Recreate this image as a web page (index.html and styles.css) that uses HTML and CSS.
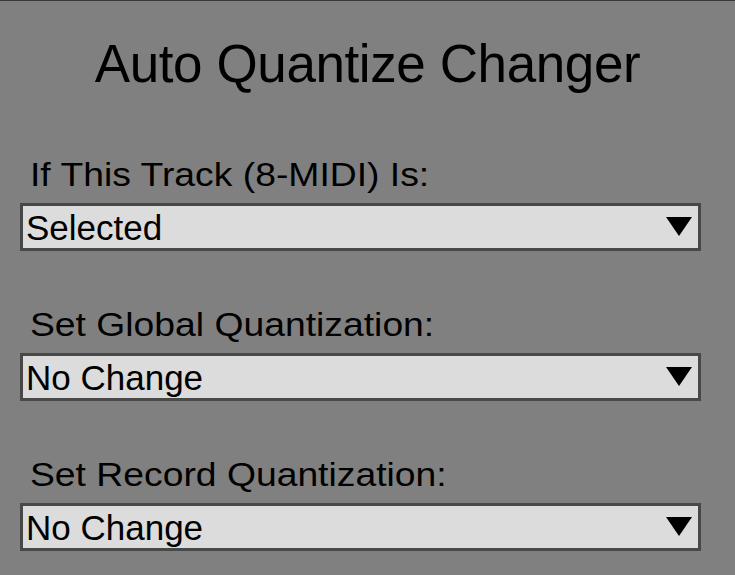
FILE: index.html
```html
<!DOCTYPE html>
<html>
<head>
<meta charset="utf-8">
<link rel="stylesheet" href="styles.css">
</head>
<body>
<div class="panel">
  <h1 class="title">Auto Quantize Changer</h1>
  <div class="form">
    <div class="field">
      <div class="label"><span class="label-text">If This Track (8-MIDI) Is:</span></div>
      <div class="dropdown">
        <span class="value">Selected</span>
        <svg class="arrow" width="26" height="19" viewBox="0 0 26 19"><polygon points="0,0 26,0 13,19" fill="#000"/></svg>
      </div>
    </div>
    <div class="field">
      <div class="label"><span class="label-text">Set Global Quantization:</span></div>
      <div class="dropdown">
        <span class="value">No Change</span>
        <svg class="arrow" width="26" height="19" viewBox="0 0 26 19"><polygon points="0,0 26,0 13,19" fill="#000"/></svg>
      </div>
    </div>
    <div class="field">
      <div class="label"><span class="label-text">Set Record Quantization:</span></div>
      <div class="dropdown">
        <span class="value">No Change</span>
        <svg class="arrow" width="26" height="19" viewBox="0 0 26 19"><polygon points="0,0 26,0 13,19" fill="#000"/></svg>
      </div>
    </div>
  </div>
</div>
</body>
</html>
```
FILE: styles.css
```css
html, body {
  margin: 0;
  padding: 0;
}
body {
  background: #808080;
  font-family: "Liberation Sans", Arial, sans-serif;
  color: #000;
  width: 735px;
  height: 575px;
  overflow: hidden;
}
.panel {
  border-top: 1px solid #383838;
  height: 574px;
  box-sizing: border-box;
  padding-top: 37px;
}
.title {
  margin: 0;
  font-size: 53px;
  font-weight: normal;
  line-height: 52px;
  height: 52px;
  text-align: center;
  letter-spacing: -0.4px;
}
.form {
  padding: 69px 34px 0 20px;
  display: flex;
  flex-direction: column;
  gap: 58px;
}
.field {
  display: flex;
  flex-direction: column;
  gap: 12px;
}
.label {
  font-size: 33px;
  line-height: 32px;
  height: 32px;
  padding-left: 10px;
}
.label-text {
  display: inline-block;
  transform: scaleX(1.13);
  transform-origin: left center;
  white-space: nowrap;
}
.dropdown {
  height: 48px;
  box-sizing: border-box;
  border: 3px solid #484848;
  background: #dcdcdc;
  display: flex;
  align-items: center;
  justify-content: space-between;
  padding: 0 6px 0 3px;
}
.value {
  font-size: 35px;
  line-height: 42px;
  padding-top: 1px;
}
.arrow {
  display: block;
  margin-top: -2px;
}
```
